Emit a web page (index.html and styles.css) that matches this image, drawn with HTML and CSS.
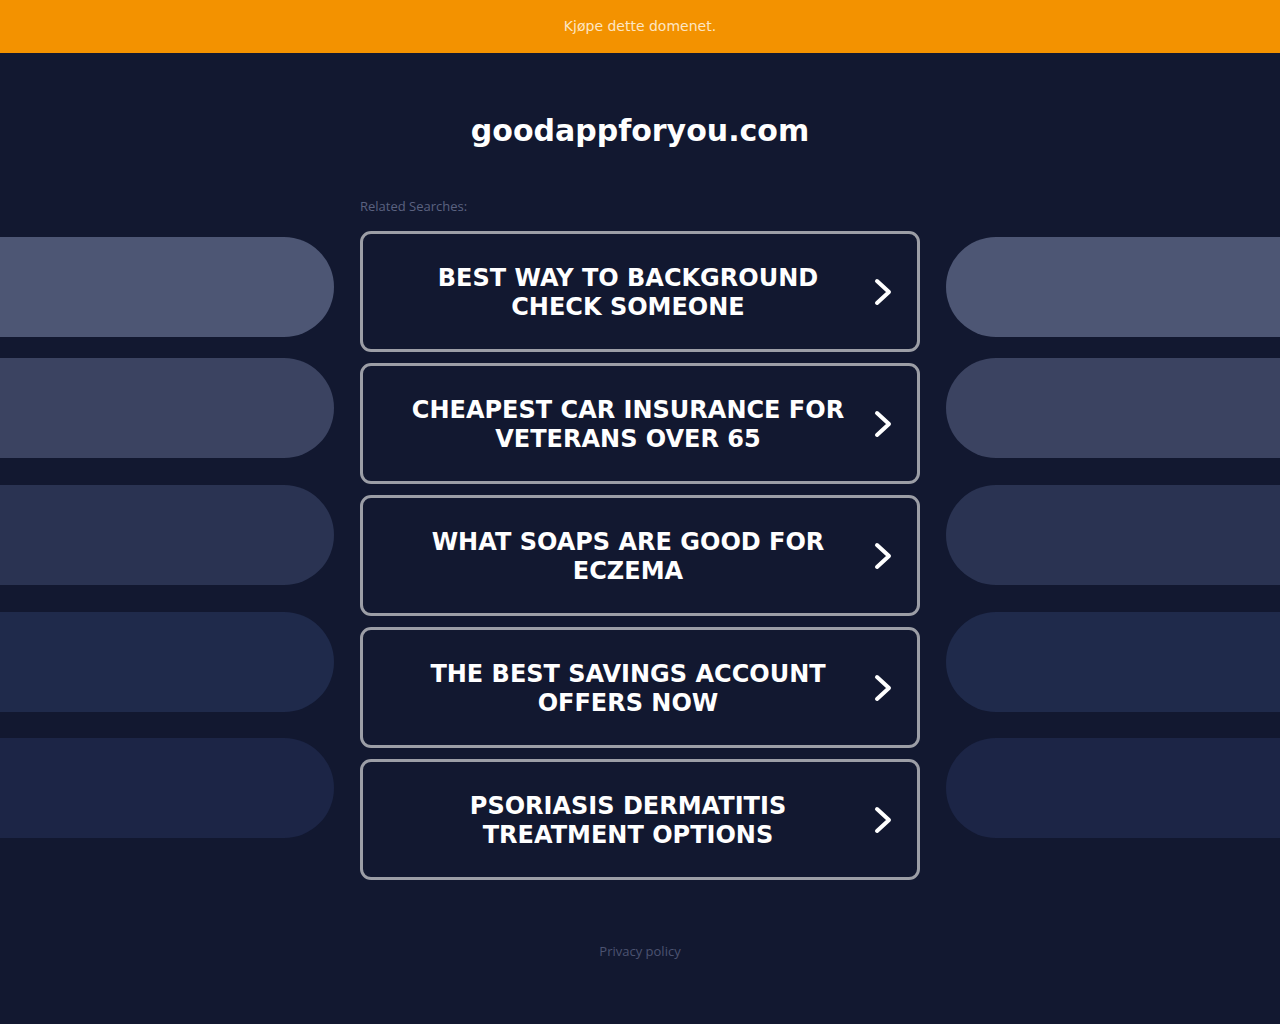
FILE: index.html
```html
<!DOCTYPE html>
<html lang="no">
<head>
<meta charset="utf-8">
<title>goodappforyou.com</title>
<link rel="stylesheet" href="styles.css">
</head>
<body>
<div class="topbar">Kjøpe dette domenet.</div>
<h1 class="title">goodappforyou.com</h1>
<main class="main">
  <div class="side side-left">
    <div class="pill p1"></div>
    <div class="pill p2"></div>
    <div class="pill p3"></div>
    <div class="pill p4"></div>
    <div class="pill p5"></div>
  </div>
  <div class="center">
    <div class="label">Related Searches:</div>
    <div class="cards">
      <a class="card" href="#"><span class="card-text">BEST WAY TO BACKGROUND CHECK SOMEONE</span><svg class="chev" viewBox="0 0 20 28" width="20" height="28"><path d="M4 3 L16 14 L4 25" fill="none" stroke="#fff" stroke-width="4" stroke-linecap="round" stroke-linejoin="round"/></svg></a>
      <a class="card" href="#"><span class="card-text">CHEAPEST CAR INSURANCE FOR VETERANS OVER 65</span><svg class="chev" viewBox="0 0 20 28" width="20" height="28"><path d="M4 3 L16 14 L4 25" fill="none" stroke="#fff" stroke-width="4" stroke-linecap="round" stroke-linejoin="round"/></svg></a>
      <a class="card" href="#"><span class="card-text">WHAT SOAPS ARE GOOD FOR ECZEMA</span><svg class="chev" viewBox="0 0 20 28" width="20" height="28"><path d="M4 3 L16 14 L4 25" fill="none" stroke="#fff" stroke-width="4" stroke-linecap="round" stroke-linejoin="round"/></svg></a>
      <a class="card" href="#"><span class="card-text">THE BEST SAVINGS ACCOUNT OFFERS NOW</span><svg class="chev" viewBox="0 0 20 28" width="20" height="28"><path d="M4 3 L16 14 L4 25" fill="none" stroke="#fff" stroke-width="4" stroke-linecap="round" stroke-linejoin="round"/></svg></a>
      <a class="card" href="#"><span class="card-text">PSORIASIS DERMATITIS TREATMENT OPTIONS</span><svg class="chev" viewBox="0 0 20 28" width="20" height="28"><path d="M4 3 L16 14 L4 25" fill="none" stroke="#fff" stroke-width="4" stroke-linecap="round" stroke-linejoin="round"/></svg></a>
    </div>
  </div>
  <div class="side side-right">
    <div class="pill p1"></div>
    <div class="pill p2"></div>
    <div class="pill p3"></div>
    <div class="pill p4"></div>
    <div class="pill p5"></div>
  </div>
</main>
<footer class="footer"><a href="#" class="privacy">Privacy policy</a></footer>
</body>
</html>
```

FILE: styles.css
```css
html, body {
  margin: 0;
  padding: 0;
  background: #121830;
  min-height: 1024px;
}
body {
  font-family: "DejaVu Sans", sans-serif;
  color: #fff;
}
.topbar {
  height: 53px;
  background: #f39200;
  color: #fde6c4;
  font-size: 14px;
  line-height: 16px;
  display: flex;
  align-items: center;
  justify-content: center;
  padding-bottom: 1px;
  box-sizing: border-box;
}
.title {
  margin: 60px 0 0;
  font-size: 30px;
  line-height: 36px;
  font-weight: bold;
  text-align: center;
  color: #fff;
}
.main {
  display: grid;
  grid-template-columns: 334px 560px 334px;
  column-gap: 26px;
  margin-top: 49px;
}
.side {
  padding-top: 39px;
  display: flex;
  flex-direction: column;
}
.pill {
  height: 100px;
}
.side-left .pill {
  border-radius: 0 50px 50px 0;
}
.side-right .pill {
  border-radius: 50px 0 0 50px;
}
.p2 { margin-top: 21px; }
.p3 { margin-top: 27px; }
.p4 { margin-top: 27px; }
.p5 { margin-top: 26px; }
.p1 { background: #4d5674; }
.p2 { background: #3b4361; }
.p3 { background: #2a3352; }
.p4 { background: #1f2a4b; }
.p5 { background: #1c2546; }
.label {
  font-family: "Open Sans", "Liberation Sans", sans-serif;
  font-size: 13px;
  line-height: 16px;
  color: #5b6280;
}
.cards {
  margin-top: 17px;
  display: flex;
  flex-direction: column;
  gap: 11px;
}
.card {
  box-sizing: border-box;
  height: 121px;
  border: 3px solid #9c9ea6;
  border-radius: 11px;
  display: flex;
  align-items: center;
  padding: 0 24px 0 40px;
  text-decoration: none;
  color: #fff;
}
.card-text {
  flex: 1;
  font-size: 24px;
  line-height: 29px;
  font-weight: bold;
  letter-spacing: 0;
  text-align: center;
  padding-top: 2px;
}
.chev {
  margin-left: 20px;
  flex: none;
}
.footer {
  margin-top: 61px;
  text-align: center;
}
.privacy {
  font-family: "Open Sans", "Liberation Sans", sans-serif;
  font-size: 13px;
  line-height: 16px;
  color: #4c5371;
  text-decoration: none;
}
```
